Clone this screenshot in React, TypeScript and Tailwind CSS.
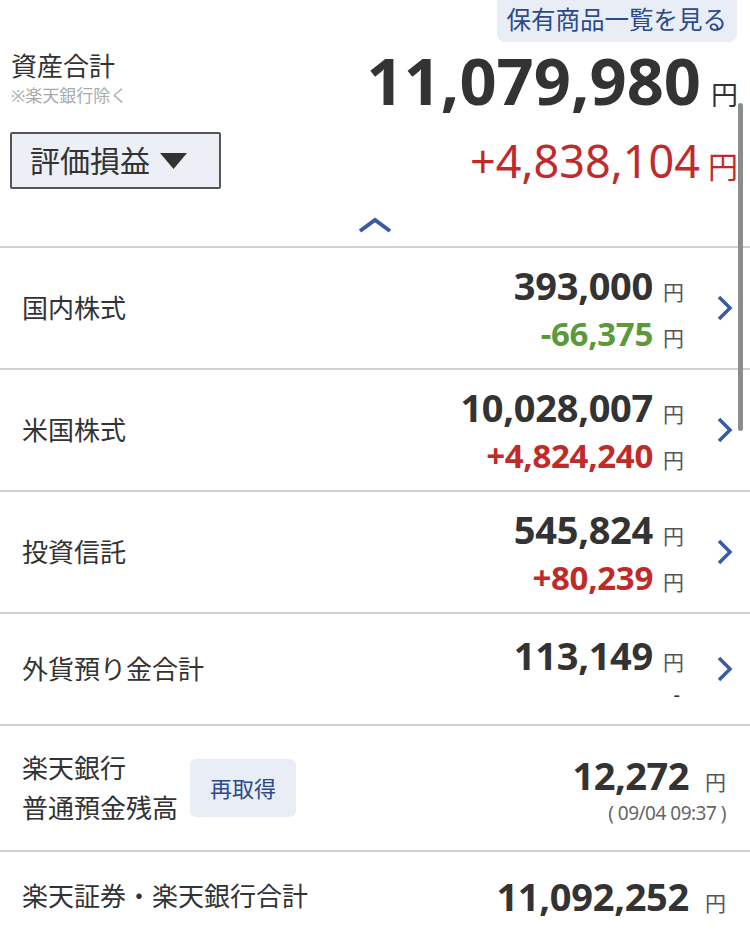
import React from 'react';

const font = "font-['Noto_Sans','Noto_Sans_CJK_JP',sans-serif]";

interface AssetRowProps {
    label: string;
    value: string;
    diff: string;
    diffColor: string;
    height: string;
}

const ChevronRight = () => (
    <svg width="22" height="30" viewBox="0 0 22 30" className="shrink-0">
        <path d="M5 4 L16 15 L5 26" fill="none" stroke="#3a5aa6" strokeWidth="3.5" />
    </svg>
);

const AssetRow = ({ label, value, diff, diffColor, height }: AssetRowProps) => (
    <div className={`flex items-center justify-between border-b-2 border-[#d0d0d0] pl-[22px] pr-[14px] ${height}`}>
        <span className="text-[26px] text-[#333]">{label}</span>
        <div className="flex items-center gap-[30px]">
            <div className="flex flex-col items-end">
                <div className="flex items-baseline gap-[10px]">
                    <span className="text-[38px] leading-[52px] font-bold tracking-[-0.3px] text-[#333]">{value}</span>
                    <span className="text-[21px] text-[#555]">円</span>
                </div>
                <div className="flex items-baseline gap-[10px]">
                    <span className={`text-[33px] leading-[46px] font-bold tracking-[-0.3px] ${diffColor}`}>{diff}</span>
                    <span className="text-[21px] text-[#555]">円</span>
                </div>
            </div>
            <ChevronRight />
        </div>
    </div>
);

export default function App() {
    return (
        <div className={`relative w-[750px] h-[932px] overflow-hidden bg-white ${font}`}>
            <div className="flex justify-end pr-[13px]">
                <div className="rounded-b-[8px] bg-[#e9edf6] px-[10px] pt-[2px] pb-[5px] text-[24.5px] leading-[35px] text-[#2c4a8c]">
                    保有商品一覧を見る
                </div>
            </div>

            <div className="flex items-start justify-between pl-[11px] pr-[12px]">
                <div className="flex flex-col pt-[6px]">
                    <span className="text-[26px] leading-[36px] text-[#333]">資産合計</span>
                    <span className="text-[17px] leading-[24px] text-[#aaa]">※楽天銀行除く</span>
                </div>
                <div className="flex items-baseline gap-[10px]">
                    <span className="text-[65px] leading-[76px] font-bold text-[#333]">11,079,980</span>
                    <span className="text-[27px] text-[#333]">円</span>
                </div>
            </div>

            <div className="flex items-center justify-between pl-[10px] pr-[12px] pt-[14px]">
                <div className="flex h-[57px] w-[211px] items-center gap-[10px] rounded-[2px] border-2 border-[#555] bg-[#edeff7] pl-[18px]">
                    <span className="text-[30px] text-[#333]">評価損益</span>
                    <svg width="27" height="16" viewBox="0 0 27 16">
                        <path d="M0 0 H27 L13.5 16 Z" fill="#333" />
                    </svg>
                </div>
                <div className="flex items-baseline gap-[8px]">
                    <span className="text-[45px] leading-[56px] text-[#bf2b2b]">+4,838,104</span>
                    <span className="text-[30px] text-[#bf2b2b]">円</span>
                </div>
            </div>

            <div className="flex justify-center border-b-2 border-[#d0d0d0] pt-[28px] pb-[13px]">
                <svg width="34" height="16" viewBox="0 0 34 16">
                    <path d="M2 14 L17 3 L32 14" fill="none" stroke="#3a5aa6" strokeWidth="4" />
                </svg>
            </div>

            <AssetRow label="国内株式" value="393,000" diff="-66,375" diffColor="text-[#5a9a3a]" height="h-[122px]" />
            <AssetRow label="米国株式" value="10,028,007" diff="+4,824,240" diffColor="text-[#bf2b2b]" height="h-[122px]" />
            <AssetRow label="投資信託" value="545,824" diff="+80,239" diffColor="text-[#bf2b2b]" height="h-[122px]" />

            <div className="flex h-[112px] items-center justify-between border-b-2 border-[#d0d0d0] pl-[22px] pr-[14px]">
                <span className="text-[26px] text-[#333]">外貨預り金合計</span>
                <div className="flex items-center gap-[30px]">
                    <div className="flex flex-col items-end">
                        <div className="flex items-baseline gap-[10px]">
                            <span className="text-[38px] leading-[52px] font-bold tracking-[-0.3px] text-[#333]">113,149</span>
                            <span className="text-[21px] text-[#555]">円</span>
                        </div>
                        <span className="pr-[4px] text-[20px] leading-[28px] text-[#333]">-</span>
                    </div>
                    <ChevronRight />
                </div>
            </div>

            <div className="flex h-[126px] items-center justify-between border-b-2 border-[#d0d0d0] pl-[22px] pr-[24px]">
                <div className="flex items-center gap-[12px]">
                    <div className="flex flex-col text-[26px] leading-[40px] text-[#333]">
                        <span>楽天銀行</span>
                        <span>普通預金残高</span>
                    </div>
                    <div className="flex h-[58px] w-[106px] items-center justify-center rounded-[6px] bg-[#e9edf6] text-[22px] text-[#2c4a8c]">
                        再取得
                    </div>
                </div>
                <div className="flex flex-col items-end">
                    <div className="flex items-baseline gap-[16px]">
                        <span className="text-[38px] leading-[50px] font-bold tracking-[-0.5px] text-[#333]">12,272</span>
                        <span className="text-[21px] text-[#555]">円</span>
                    </div>
                    <span className="text-[19px] leading-[26px] tracking-[-0.5px] text-[#666]">( 09/04 09:37 )</span>
                </div>
            </div>

            <div className="flex h-[88px] items-center justify-between pl-[22px] pr-[24px]">
                <span className="text-[26px] text-[#333]">楽天証券・楽天銀行合計</span>
                <div className="flex items-baseline gap-[16px]">
                    <span className="text-[38px] font-bold tracking-[-0.3px] text-[#333]">11,092,252</span>
                    <span className="text-[21px] text-[#555]">円</span>
                </div>
            </div>

            <div className="absolute left-[738px] top-[103px] h-[328px] w-[5px] rounded-full bg-[#8c8c8c]" />
        </div>
    );
}
